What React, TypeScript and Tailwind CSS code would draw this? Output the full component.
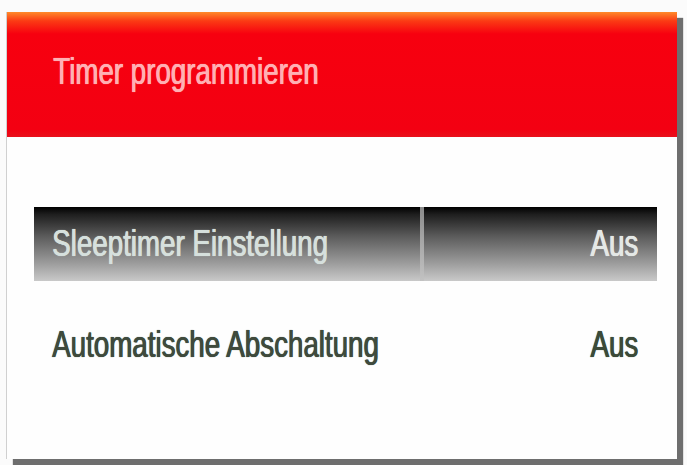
import React from "react";

// Timer settings panel — TV-style OSD menu with a red title bar and two rows.

const font = "font-['Liberation_Sans',Arial,sans-serif]";

function Label({ text, className }: { text: string; className: string }) {
  return (
    <span
      className={`inline-block origin-left scale-x-[0.77] whitespace-nowrap text-[36px] leading-none [text-shadow:0.8px_0_0_currentColor,0_0_1px_currentColor] ${className}`}
    >
      {text}
    </span>
  );
}

function Value({ text, className }: { text: string; className: string }) {
  return (
    <span
      className={`inline-block origin-right scale-x-[0.77] whitespace-nowrap text-[36px] leading-none [text-shadow:0.8px_0_0_currentColor,0_0_1px_currentColor] ${className}`}
    >
      {text}
    </span>
  );
}

export default function App() {
  return (
    <div className={`h-[465px] w-[687px] overflow-hidden bg-[#fbfbfb] pl-[7px] pt-[12px] ${font}`}>
      <div className="flex h-[447px] w-[670px] flex-col bg-[#fefefe] shadow-[6px_6px_1px_#6e6e6e,-1px_0_0_#d0d0d0]">
        {/* title bar */}
        <div className="h-[125px] bg-[linear-gradient(to_bottom,#ff8a2a_0px,#fb3a14_9px,#f7000f_22px,#f30012_94%,#e8101c_100%)] pl-[46px] pt-[42px]">
          <Label text="Timer programmieren" className="text-[#ffb0b4]" />
        </div>

        {/* selected row */}
        <div className="ml-[27px] mr-[20px] mt-[70px] flex h-[74px]">
          <div className="flex w-[386px] items-center bg-[linear-gradient(to_bottom,#000000_0%,#1e1e1e_10%,#5c5c5c_40%,#9a9a9a_75%,#c9c9c9_100%)] pl-[18px]">
            <Label text="Sleeptimer Einstellung" className="text-[#d6e0dd]" />
          </div>
          <div className="w-[4px] bg-[linear-gradient(to_bottom,#8a8a8a,#a9a9a9_50%,#c2c2c2)]" />
          <div className="flex flex-1 items-center justify-end bg-[linear-gradient(to_bottom,#000000_0%,#1e1e1e_10%,#5c5c5c_40%,#9a9a9a_75%,#c9c9c9_100%)] pr-[19px]">
            <Value text="Aus" className="text-[#e4e8e6]" />
          </div>
        </div>

        {/* second row */}
        <div className="ml-[45px] mr-[39px] mt-[46px] flex items-center justify-between">
          <Label text="Automatische Abschaltung" className="text-[#3f4a3c]" />
          <Value text="Aus" className="text-[#3c4a38]" />
        </div>
      </div>
    </div>
  );
}
